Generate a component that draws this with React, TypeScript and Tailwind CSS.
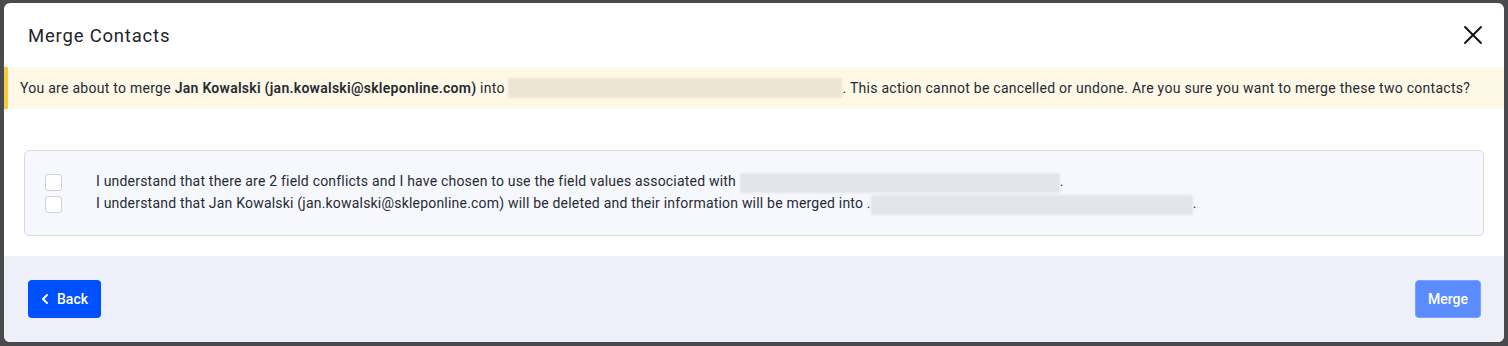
import { ChevronLeft, X } from "lucide-react";

const font = { fontFamily: "Roboto, 'Noto Sans', sans-serif" };

function Blur({ w, tone }: { w: string; tone: "warn" | "panel" }) {
  return (
    <span
      className={`inline-block h-[20px] align-middle rounded-[2px] blur-[1px] ${w} ${
        tone === "warn" ? "bg-[#ece4d2]" : "bg-[#e4e5ec]"
      }`}
    />
  );
}

function CheckRow({ children }: { children: React.ReactNode }) {
  return (
    <label className="flex items-center h-[22px]">
      <span className="w-[17px] h-[17px] rounded-[3px] border border-[#cfd2d8] bg-white shrink-0" />
      <span className="ml-[34px] text-[14px] tracking-[0.2px] text-[#262a33] whitespace-nowrap">{children}</span>
    </label>
  );
}

export default function App() {
  return (
    <div className="h-[346px] w-[1508px] bg-[#4a4a4c] px-[4px] pt-[3px] overflow-hidden" style={font}>
      <div className="w-[1500px] h-[339px] bg-white rounded-[6px] overflow-hidden flex flex-col">
        {/* Header */}
        <div className="h-[64px] flex items-center justify-between pl-[24px] pr-[15px] shrink-0">
          <h2 className="text-[18.5px] text-[#22252b] tracking-[0.8px] pt-[3px]">Merge Contacts</h2>
          <X className="w-[32px] h-[32px] text-[#111]" strokeWidth={1.4} />
        </div>

        {/* Warning */}
        <div className="h-[42px] shrink-0 bg-[#fef8e6] border-l-4 border-[#f9c93c] flex items-center pl-[12px] text-[14px] tracking-[0.27px] text-[#262a33] whitespace-nowrap">
          You are about to merge&nbsp;<b className="font-semibold">Jan Kowalski (jan.kowalski@skleponline.com)</b>&nbsp;into&nbsp;
          <Blur w="w-[334px]" tone="warn" />
          . This action cannot be cancelled or undone. Are you sure you want to merge these two contacts?
        </div>

        {/* Body */}
        <div className="pt-[41px] pb-[20px] px-[20px] shrink-0">
          <div className="h-[86px] rounded-[5px] border border-[#d7dae2] bg-[#f7f8fd] pl-[20px] flex flex-col justify-center">
            <CheckRow>
              I understand that there are 2 field conflicts and I have chosen to use the field values associated with&nbsp;
              <Blur w="w-[320px]" tone="panel" />.
            </CheckRow>
            <CheckRow>
              I understand that Jan Kowalski (jan.kowalski@skleponline.com) will be deleted and their information will be merged into .
              <Blur w="w-[322px]" tone="panel" />.
            </CheckRow>
          </div>
        </div>

        {/* Footer */}
        <div className="flex-1 bg-[#edf0f8] flex items-start justify-between px-[24px] pt-[24px]">
          <button className="h-[38px] pl-[9px] pr-[13px] rounded-[4px] bg-[#0050ff] text-white text-[14px] font-medium flex items-center gap-[4px]">
            <ChevronLeft className="w-[16px] h-[16px]" strokeWidth={3} />
            Back
          </button>
          <button className="h-[38px] px-[12px] mr-[-1px] rounded-[4px] bg-[#5a8cff] border border-[#7aa2ff] text-white text-[14px] font-medium">
            Merge
          </button>
        </div>
      </div>
    </div>
  );
}
